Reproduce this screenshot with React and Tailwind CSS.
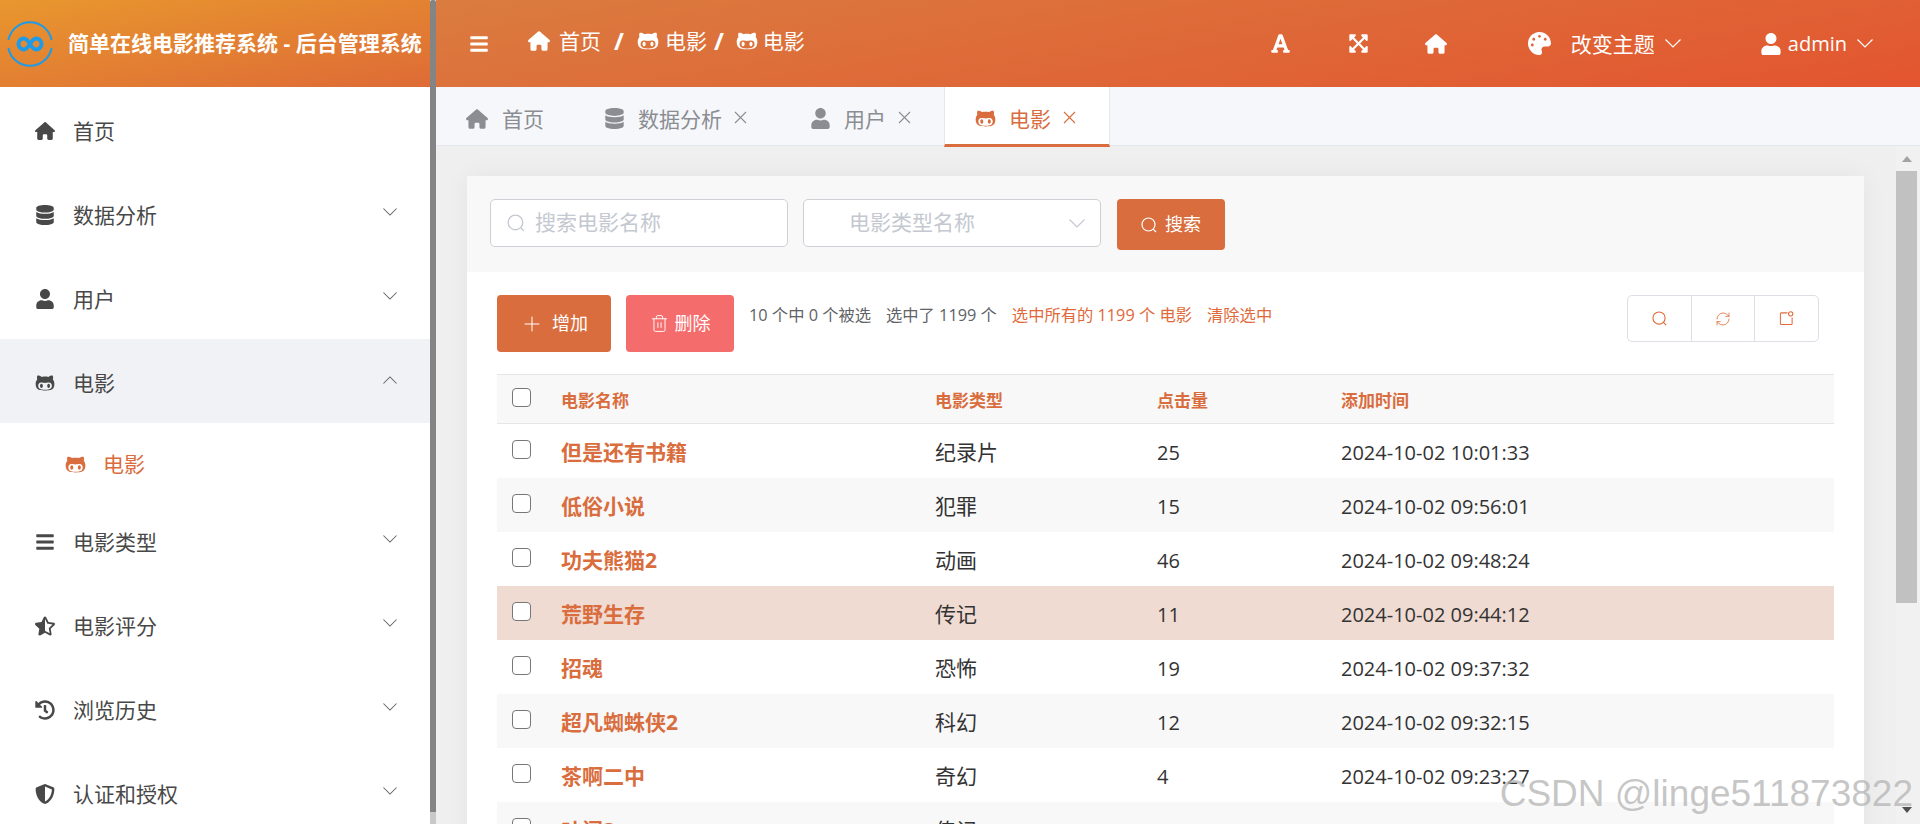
import { RefreshCw, Plus, Trash2 } from "lucide-react";
import { FaDatabase, FaUser, FaGithubAlt, FaBars, FaHistory, FaShieldAlt, FaFont, FaExpandArrowsAlt, FaPalette, FaStarHalfAlt } from "react-icons/fa";
import { FaHouse } from "react-icons/fa6";

const font = "font-['Open_Sans','Noto_Sans_CJK_SC',sans-serif]";

const menu = [
  { icon: FaHouse, label: "首页" },
  { icon: FaDatabase, label: "数据分析", arrow: true },
  { icon: FaUser, label: "用户", arrow: true },
  { icon: FaGithubAlt, label: "电影", up: true, active: true },
];

const menu2 = [
  { icon: FaBars, label: "电影类型" },
  { icon: FaStarHalfAlt, label: "电影评分" },
  { icon: FaHistory, label: "浏览历史" },
  { icon: FaShieldAlt, label: "认证和授权" },
];

const rows = [
  ["但是还有书籍", "纪录片", "25", "2024-10-02 10:01:33"],
  ["低俗小说", "犯罪", "15", "2024-10-02 09:56:01"],
  ["功夫熊猫2", "动画", "46", "2024-10-02 09:48:24"],
  ["荒野生存", "传记", "11", "2024-10-02 09:44:12"],
  ["招魂", "恐怖", "19", "2024-10-02 09:37:32"],
  ["超凡蜘蛛侠2", "科幻", "12", "2024-10-02 09:32:15"],
  ["茶啊二中", "奇幻", "4", "2024-10-02 09:23:27"],
  ["叶问3", "传记", "36", "2024-10-02 09:17:18"],
];

function Logo() {
  return (
    <svg width="46" height="46" viewBox="0 0 46 46" fill="none" stroke="#1e9be8" className="shrink-0">
      <path d="M1.400 19A22 22 0 0 1 44.600 19" strokeWidth="2" />
      <path d="M1.400 27A22 22 0 0 0 44.600 27" strokeWidth="2" />
      <path d="M23 23c-2.500-4-4-5.500-6-5.500a5.500 5.500 0 0 0 0 11c2 0 3.500-1.500 6-5.500s4-5.500 6-5.500a5.500 5.500 0 0 1 0 11c-2 0-3.500-1.500-6-5.500z" strokeWidth="4" />
    </svg>
  );
}

function Chevron({ w = 16, up, className = "" }) {
  return (
    <svg width={w} height={w / 2 + 1} viewBox="0 0 16 9" fill="none" stroke="currentColor" strokeWidth="1.200" className={`shrink-0 ${up ? "rotate-180" : ""} ${className}`}>
      <path d="M0.500 0.500L8 8L15.500 0.500" />
    </svg>
  );
}

function Magnifier({ size = 16, className = "" }) {
  return (
    <svg width={size} height={size} viewBox="0 0 16 16" fill="none" stroke="currentColor" strokeWidth="1.200" className={`shrink-0 ${className}`}>
      <circle cx="7.500" cy="7.500" r="6.500" />
      <path d="M12.200 12.200L15 15" />
    </svg>
  );
}

function Close() {
  return (
    <svg width="13" height="13" viewBox="0 0 13 13" stroke="currentColor" strokeWidth="1.100" className="ml-[12px] mt-[-2px] shrink-0">
      <path d="M1 1L12 12M12 1L1 12" />
    </svg>
  );
}

function MenuItem({ icon: Icon, label, arrow, up, active }) {
  return (
    <div className={`flex h-[84px] items-center pl-[34px] pr-[33px] text-[#484848] ${active ? "bg-[#f0f2f5]" : ""}`}>
      <div className="mt-[4px] flex flex-1 items-center">
        <span className="flex w-[22px] justify-center text-[20px]"><Icon /></span>
        <span className="ml-[17px] text-[21px] leading-[28px]">{label}</span>
      </div>
      {arrow && <Chevron w={14} className="mb-[2px] text-[#666]" />}
      {up && <Chevron w={14} up className="mb-[2px] text-[#666]" />}
    </div>
  );
}

function Tab({ icon: Icon, label, close, active, iconClass = "text-[21px]" }) {
  return (
    <div className={`flex items-center ${close ? "pl-[30px] pr-[33px]" : "px-[30px]"} ${active ? "h-[60px] border-x border-b-[3px] border-x-[#e4e7ed] border-b-[#d96d3e] bg-white pt-[6px] text-[#d96d3e]" : "h-[59px] pt-[4px] text-[#8b8d92]"}`}>
      <Icon className={iconClass} />
      <span className={`${close ? "ml-[13px]" : "ml-[14px]"} text-[21px] leading-[28px]`}>{label}</span>
      {close && <Close />}
    </div>
  );
}

function Checkbox() {
  return <span className="mt-[-3px] block h-[19px] w-[19px] rounded-[4px] border border-[#777] bg-white" />;
}

export default function App() {
  return (
    <div className={`${font} relative flex h-[824px] w-[1920px] overflow-hidden bg-white`}>
      <aside className="flex w-[436px] shrink-0">
        <div className="flex-1 overflow-hidden">
          <div className="flex h-[87px] items-center bg-[linear-gradient(170deg,#e8972e,#de6b36)] pl-[7px]">
            <Logo />
            <span className="ml-[15px] whitespace-nowrap text-[21px] font-bold text-white">简单在线电影推荐系统 - 后台管理系统</span>
          </div>
          <div>
            {menu.map((m) => <MenuItem key={m.label} {...m} />)}
            <div className="flex h-[75px] items-center pl-[65px] pt-[7px] text-[#d96d3e]">
              <FaGithubAlt className="text-[21px]" />
              <span className="ml-[17px] text-[21px] leading-[28px]">电影</span>
            </div>
            {menu2.map((m) => <MenuItem key={m.label} {...m} arrow />)}
          </div>
        </div>
        <div className="flex w-[6px] flex-col">
          <div className="flex-1 rounded-t-[2px] bg-[#848484]" />
          <div className="h-[12px] bg-[#c8c8c8]" />
        </div>
      </aside>

      <main className="flex min-w-0 flex-1 flex-col bg-[#efefef]">
        <header className="flex h-[87px] shrink-0 items-center bg-[linear-gradient(170deg,#da7c40,#e3552f)] pl-[33px] pr-[47px] text-white">
          <FaBars className="text-[20px]" />
          <div className="mb-[6px] ml-[39px] flex items-center text-[21px] leading-[28px]">
            <FaHouse className="text-[22px]" />
            <span className="ml-[9px]">首页</span>
            <span className="ml-[13px] mr-[13px] text-[24px] font-bold leading-none">/</span>
            <FaGithubAlt className="text-[22px]" />
            <span className="ml-[6px]">电影</span>
            <span className="ml-[7px] mr-[12px] text-[24px] font-bold leading-none">/</span>
            <FaGithubAlt className="text-[22px]" />
            <span className="ml-[5px]">电影</span>
          </div>
          <div className="ml-auto flex items-center">
            <FaFont className="text-[21px]" />
            <FaExpandArrowsAlt className="ml-[57px] text-[21px]" />
            <FaHouse className="ml-[56px] text-[22px]" />
            <FaPalette className="ml-[81px] text-[23px]" />
            <span className="ml-[20px] text-[21px] leading-[28px]">改变主题</span>
            <Chevron className="ml-[10px]" />
            <FaUser className="ml-[79px] text-[22px]" />
            <span className="ml-[6px] text-[20px]">admin</span>
            <Chevron className="ml-[10px]" />
          </div>
        </header>

        <nav className="relative z-10 flex h-[59px] shrink-0 items-start border-b border-[#e4e7ed] bg-[#f5f7fb]">
          <Tab icon={FaHouse} label="首页" iconClass="text-[22px]" />
          <Tab icon={FaDatabase} label="数据分析" close />
          <Tab icon={FaUser} label="用户" close />
          <Tab icon={FaGithubAlt} label="电影" close active />
        </nav>

        <div className="flex min-h-0 flex-1">
          <div className="min-w-0 flex-1 overflow-hidden pl-[31px] pr-[32px] pt-[30px]">
            <section className="bg-white shadow-[0_0_24px_rgba(0,0,0,0.05)]">
              <div className="flex h-[96px] items-start gap-[15px] bg-[#f8f8f8] px-[23px] pt-[23px]">
                <div className="flex h-[48px] w-[298px] items-center rounded-[5px] border border-[#cfd0d6] bg-white pl-[16px] text-[21px] text-[#c4c8d0]">
                  <Magnifier size={18} />
                  <span className="ml-[10px]">搜索电影名称</span>
                </div>
                <div className="flex h-[48px] w-[298px] items-center justify-between rounded-[5px] border border-[#cfd0d6] bg-white pl-[45px] pr-[15px] text-[21px] text-[#c4c8d0]">
                  <span>电影类型名称</span>
                  <Chevron />
                </div>
                <button className="ml-[1px] flex h-[51px] w-[108px] items-center justify-center rounded-[4px] bg-[#d96d3e] text-[18px] text-white">
                  <Magnifier size={16} />
                  <span className="ml-[8px]">搜索</span>
                </button>
              </div>

              <div className="px-[30px] pt-[23px]">
                <div className="flex h-[57px] items-start">
                  <button className="flex h-[57px] w-[114px] items-center justify-center rounded-[4px] bg-[#d96d3e] text-[18px] text-white">
                    <Plus size={24} strokeWidth={1} />
                    <span className="ml-[8px]">增加</span>
                  </button>
                  <button className="ml-[15px] flex h-[57px] w-[108px] items-center justify-center rounded-[4px] bg-[#f56c6c] text-[18px] text-white">
                    <Trash2 size={19} strokeWidth={1.200} />
                    <span className="ml-[6px]">删除</span>
                  </button>
                  <div className="ml-[15px] flex pt-[10px] text-[16.300px] leading-[20px] text-[#606266]">
                    <span>10 个中 0 个被选</span>
                    <span className="ml-[15px]">选中了 1199 个</span>
                    <span className="ml-[15px] text-[#e0693a]">选中所有的 1199 个 电影</span>
                    <span className="ml-[15px] text-[#e0693a]">清除选中</span>
                  </div>
                  <div className="ml-auto mr-[15px] flex h-[47px] w-[192px] rounded-[5px] border border-[#dcdfe6] text-[#e0693a]">
                    <div className="flex flex-1 items-center justify-center border-r border-[#dcdfe6]"><Magnifier size={15} /></div>
                    <div className="flex flex-1 items-center justify-center border-r border-[#dcdfe6]"><RefreshCw size={16} strokeWidth={1.200} /></div>
                    <div className="flex flex-1 items-center justify-center">
                      <svg width="15" height="15" viewBox="0 0 16 16" fill="none" stroke="currentColor" strokeWidth="1.100">
                        <path d="M9 2H2.500a1 1 0 0 0-1 1v10.500a1 1 0 0 0 1 1H13a1 1 0 0 0 1-1V7" />
                        <circle cx="12.500" cy="3" r="2.300" />
                      </svg>
                    </div>
                  </div>
                </div>

                <table className="mt-[22px] w-full table-fixed border-collapse text-[20px] text-[#333]">
                  <thead>
                    <tr className="h-[49px] border-y border-[#e6e6ea] bg-[#f8f8f8] text-left text-[17px] text-[#d96d3e]">
                      <th className="w-[64px] pl-[15px]"><Checkbox /></th>
                      <th className="w-[374px] pt-[3px] font-bold">电影名称</th>
                      <th className="w-[222px] pt-[3px] font-bold">电影类型</th>
                      <th className="w-[184px] pt-[3px] font-bold">点击量</th>
                      <th className="pt-[3px] font-bold">添加时间</th>
                    </tr>
                  </thead>
                  <tbody>
                    {rows.map((r, i) => (
                      <tr key={r[0]} className={`h-[54px] ${i === 3 ? "bg-[#f0dbd2]" : i % 2 ? "bg-[#f8f8f8]" : "bg-white"}`}>
                        <td className="pl-[15px]"><Checkbox /></td>
                        <td className="pt-[4px] text-[21px] font-bold text-[#d96d3e]">{r[0]}</td>
                        <td className="pt-[4px] text-[21px]">{r[1]}</td>
                        <td className="pt-[4px]">{r[2]}</td>
                        <td className="pt-[4px]">{r[3]}</td>
                      </tr>
                    ))}
                  </tbody>
                </table>
              </div>
            </section>
          </div>
          <div className="flex w-[24px] shrink-0 flex-col items-center bg-[#f1f1f1] pr-[3px]">
            <span className="mt-[10px] h-0 w-0 border-x-[5px] border-b-[6px] border-x-transparent border-b-[#a3a3a3]" />
            <div className="mt-[9px] h-[432px] w-full bg-[#c1c1c1]" />
            <span className="mb-[11px] mt-auto h-0 w-0 border-x-[5px] border-t-[6px] border-x-transparent border-t-[#505050]" />
          </div>
        </div>
      </main>
      <span className="absolute bottom-[12px] right-[7px] font-['Liberation_Sans',sans-serif] text-[37px] leading-none text-[#b4b4b4]/75">CSDN @linge511873822</span>
    </div>
  );
}
